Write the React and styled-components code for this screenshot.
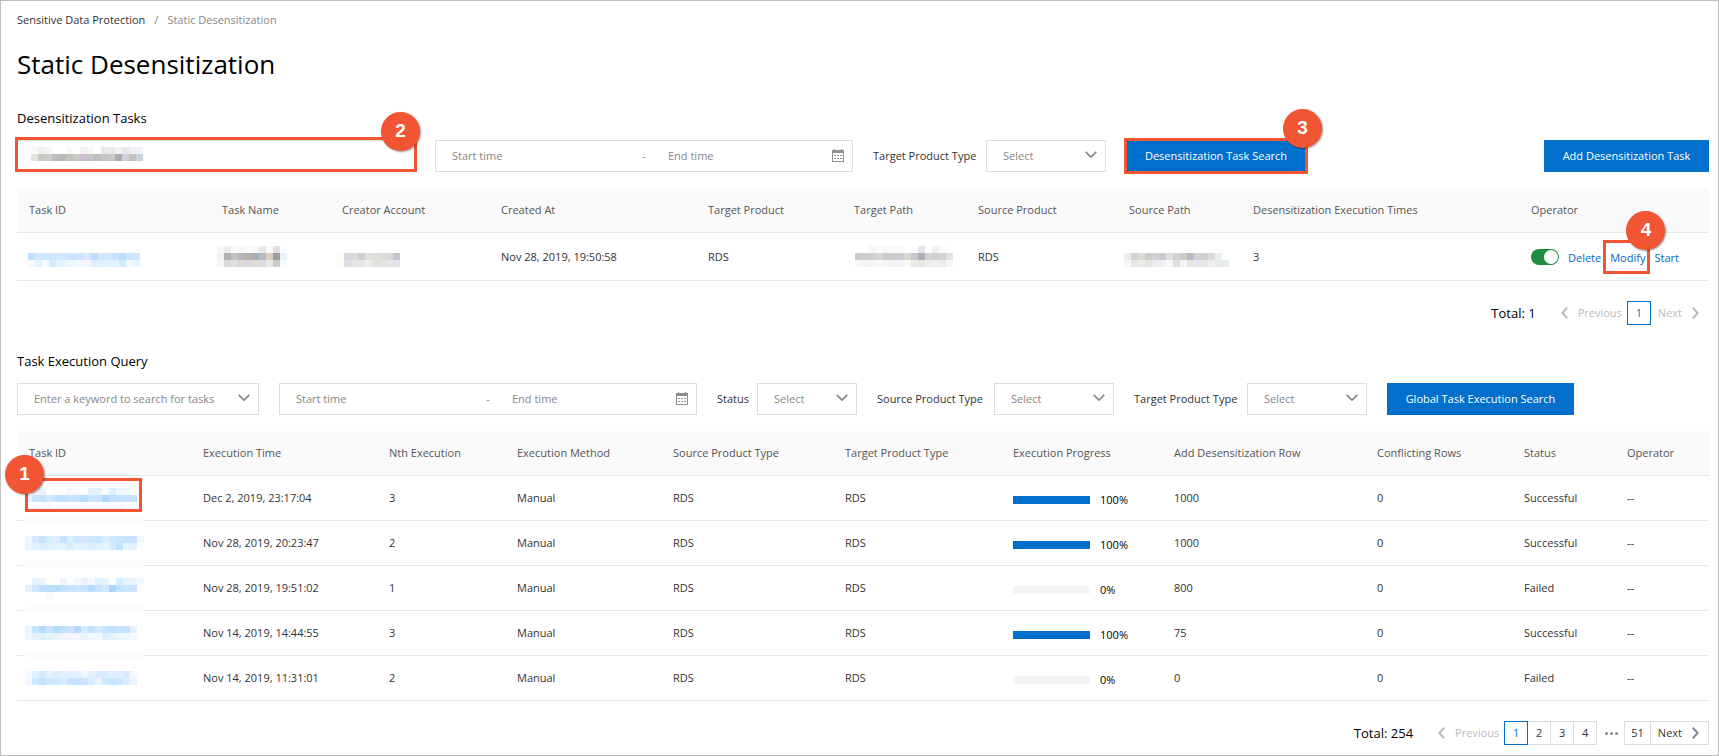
import React from "react";
import styled, { createGlobalStyle } from "styled-components";

const GlobalStyle = createGlobalStyle`
  * {
    box-sizing: border-box;
  }

  body {
    margin: 0;
    background: #fff;
    color: #333;
    font-family: "Open Sans", "Noto Sans", sans-serif;
    font-size: 11px;
    line-height: 16px;
  }

  button,
  input,
  select {
    font: inherit;
    color: inherit;
    margin: 0;
  }
`;

// 7px blocks, "-" leaves a block empty
const MASKS = {
  search: [
    "f9f9f6 f0f0f0 f4f4f4 - - f8f8f8 - f2f2f2 f7f7f7 - e9e9e9 e8e8ea f2f2f2 e6e6ec f0f0f0 f0f4fa",
    "e2e2de c9c9c5 cccccc c2bcbe b8b8b8 c2c6be cac8c6 c9bfd0 c4c4cc c0bcbc c8c4c6 c8c8c8 a9acb2 d0d0da c4c2b8 ccd2da",
  ],
  taskId: [
    "- - - - - - - - - - - - - - - -",
    "bfe0ff d4e9ff cfe8ff d0e6ff c9eaff cfe6ff cce2ff d0e4ff dbe9ff bde0ff d0e9ff cfe6ff cce4ff b9deff cce4ff cfe6ff",
    "f5faff e3f3ff f9fcff d4eeff e3f3ff eaf4ff eef6ff f2f8ff f5f5ff dfefff ddf2ff e2f3ff e3f2ff cfecff f2f8ff e6f5ff",
  ],
  taskName: [
    "f9f9f9 eaeeec fafafa f6f6f6 fbfbfa f8f8f6 e6e6ec fafafa e0e0e0 fafcff",
    "f9f0ea b4b2ae bcc6c4 b8b4b8 bab0a8 a4b0b8 b9b9c6 d4d0c6 9e9e9e e8f0f8",
    "f7f7f7 d8d8d8 e0e0e0 dcd8d8 dad8dc e0dcd6 dcdce0 e8e6e6 cccccc f6fafa",
  ],
  creator: [
    "- - - - - - - - -",
    "fcfaf6 d2dae0 dadada ccd0cc e0e0dc e0e0da dcdcd8 d8d8d8 c4c2ce",
    "fbfbf8 dfdfdf e4e4e4 e6e6e4 ececea e0e0e0 e2e2e2 e2e4e6 e2e2e6",
  ],
  targetPath: [
    "- - f7f7fa fcfcfc f4f6f8 fafafa fafafa - - e6e6e8 - f2f0f0 fafafa -",
    "ccc8ce d0ccd4 d0d0d0 d6d8d4 cccccc cacacc d0ccd0 d6d8d0 c8c8cc aeaeb4 d2d0d4 d0d0d0 d0d0da e2e2e2",
    "f7f7f7 f4f4f4 f4f4fa f6f8fa f4f4f4 f0f2f4 f4f4f6 fafafa eaeaea e6e6e4 ececea f0f0f0 ececf0 f4f6f6",
  ],
  sourcePath: [
    "- - - - - - - - - - - - - - -",
    "f0eaea d6d0d0 dadcd6 ccccc8 d2d0d8 cacacc e0e0e0 d2d2d4 d0ccc2 bab8c8 d2d0d8 d0d2d2 dedada eaeef2 -",
    "f7f7f4 e4e8e6 eaeeea e4e4e2 ececec ecf2f0 f6f8fa e2deda f6f6fa e6e6e8 e6e6ea e6e8ea eeeef0 eaece6 e6ecf0",
  ],
  exec1: [
    "- f6fbff e6f4ff - fbfdff - f5f9ff f7f9ff - e2f2ff e2f2ff f8fcff dceeff f0f6ff f0f8ff -",
    "e3f2ff cbe5ff c4e2ff d2e8ff c2e2ff bfe0ff c9e5ff c2e4ff b8dfff cbe6ff cce2ff b0d8ff bfe0ff c2e2ff c9e0ff c6e0ff",
    "- - fafcff f4faff - - - - - - - fcfdff fbfcff f8fcff - -",
  ],
  exec2: [
    "f2f8ff dbe8ff c6e4ff d6edff dceeff c6e4ff d8f0ff cfe8ff dee4ff c9e9ff c6e6ff d8eeff cce8ff c4e4ff c4e3ff cce0ff f0f8ff",
    "eaf4ff e4f2ff dceeff e0f0ff e2f2ff e2f2ff d6ecff e2f2ff e2f0ff dceeff e0f2ff e3f4ff d4ecff c2e4ff e4f4ff e0f2ff -",
  ],
  exec3: [
    "- e3f3ff e8f6ff - - eef6ff - f4f8ff eaf2ff f6faff e0f2ff e3f4ff - d6eeff e6f4ff eaf4ff f4f8ff",
    "e4f0ff d0e8ff bfe0ff bfdfff bbdeff c0e2ff c6e2ff cce6ff c6e2ff b4e0ff c8e4ff d2eaff acd6ff c2e2ff c8e6ff cce0ff fafcff",
    "- - - f6faff - - - - - - - - - - - - -",
  ],
  exec4: [
    "eaf6ff c9e6ff b0dcff cce4ff b4deff c0e2ff d0e4ff b8d8ff d6ecff c6e4ff d4eaff c4e4ff c0e2ff c4e4ff c6e0ff e4f4ff -",
    "f0f8ff e8f2ff e0f0ff e4f4ff eaf4ff f4f4ff f4f4ff f4f6ff e2f2ff f2f6ff f4f6ff dceeff e4f4ff eaf6ff eef6ff f6faff -",
  ],
  exec5: [
    "f4faff e0f2ff d4ecff eaf2ff dceeff e0f0ff e4f0ff e4f0ff f0f8ff e2f0ff dceaff dceaff e0eeff e0eeff dae8ff f6faff -",
    "f2f8ff d0eaff c0e4ff cce8ff d0eaff dcecff c6e2ff c6e4ff cce4ff d8eeff ecf0ff cce8ff c4e4ff cce8ff dceeff e8f4ff -",
  ],
};

const TASK_COLUMNS = [
  ["Task ID", 193],
  ["Task Name", 120],
  ["Creator Account", 159],
  ["Created At", 207],
  ["Target Product", 146],
  ["Target Path", 124],
  ["Source Product", 151],
  ["Source Path", 124],
  ["Desensitization Execution Times", 278],
  ["Operator", 190],
];

const EXECUTION_COLUMNS = [
  ["Task ID", 174],
  ["Execution Time", 186],
  ["Nth Execution", 128],
  ["Execution Method", 156],
  ["Source Product Type", 172],
  ["Target Product Type", 168],
  ["Execution Progress", 161],
  ["Add Desensitization Row", 203],
  ["Conflicting Rows", 147],
  ["Status", 103],
  ["Operator", 94],
];

const EXECUTIONS = [
  { mask: "exec1", time: "Dec 2, 2019, 23:17:04", nth: 3, progress: 100, rows: 1000, status: "Successful" },
  { mask: "exec2", time: "Nov 28, 2019, 20:23:47", nth: 2, progress: 100, rows: 1000, status: "Successful" },
  { mask: "exec3", time: "Nov 28, 2019, 19:51:02", nth: 1, progress: 0, rows: 800, status: "Failed" },
  { mask: "exec4", time: "Nov 14, 2019, 14:44:55", nth: 3, progress: 100, rows: 75, status: "Successful" },
  { mask: "exec5", time: "Nov 14, 2019, 11:31:01", nth: 2, progress: 0, rows: 0, status: "Failed" },
];

function Mask({ name }) {
  const rows = MASKS[name].map((row) => row.split(" "));
  const width = rows[0].length * 7;
  const height = rows.length * 7;
  return (
    <svg width={width} height={height} shapeRendering="crispEdges" aria-hidden="true">
      {rows.map((row, y) =>
        row.map((color, x) =>
          color === "-" ? null : <rect key={x + "-" + y} x={x * 7} y={y * 7} width="7" height="7" fill={"#" + color} />
        )
      )}
    </svg>
  );
}

function ChevronDown() {
  return (
    <svg width="12" height="8" viewBox="0 0 12 8" fill="none" stroke="#888" strokeWidth="1.7" aria-hidden="true">
      <path d="M0.7 0.8 L6 6 L11.3 0.8" />
    </svg>
  );
}

function Arrow({ left, muted }) {
  return (
    <svg width="7" height="12" viewBox="0 0 7 12" fill="none" stroke={muted ? "#bbb" : "#888"} strokeWidth="2" aria-hidden="true">
      <path d={left ? "M6.2 0.7 L1.4 6 L6.2 11.3" : "M0.8 0.7 L5.6 6 L0.8 11.3"} />
    </svg>
  );
}

function CalendarIcon() {
  return (
    <svg width="12" height="14" viewBox="0 0 12 14" fill="#8f8f8f" shapeRendering="crispEdges" aria-hidden="true">
      <path d="M2 0h1v1h6V0h1v1h2v12H0V1h2zM1 4v8h10V4z" fillRule="evenodd" />
      <path d="M2 6h2v1H2zM5 6h2v1H5zM8 6h2v1H8zM2 9h2v1H2zM5 9h2v1H5zM8 9h2v1H8z" />
    </svg>
  );
}

function SelectField({ id, label, labelWidth, width, placeholder = "Select" }) {
  return (
    <F.Field>
      {label && (
        <F.Label htmlFor={id} $width={labelWidth}>
          {label}
        </F.Label>
      )}
      <F.SelectBox $width={width}>
        <F.Select id={id} aria-label={label ? undefined : placeholder}>
          <option>{placeholder}</option>
        </F.Select>
        <F.SelectIcon>
          <ChevronDown />
        </F.SelectIcon>
      </F.SelectBox>
    </F.Field>
  );
}

function DateRange({ name }) {
  return (
    <F.Range>
      <F.RangeHalf>
        <F.RangeInput aria-label={name + " start time"} placeholder="Start time" />
      </F.RangeHalf>
      <F.RangeDash>-</F.RangeDash>
      <F.RangeHalf>
        <F.RangeInput aria-label={name + " end time"} placeholder="End time" />
        <CalendarIcon />
      </F.RangeHalf>
    </F.Range>
  );
}

function DataTable({ columns, children }) {
  return (
    <T.Table>
      <colgroup>
        {columns.map(([title, width]) => (
          <T.Col key={title} $width={width} />
        ))}
      </colgroup>
      <thead>
        <tr>
          {columns.map(([title]) => (
            <T.Head key={title}>{title}</T.Head>
          ))}
        </tr>
      </thead>
      <tbody>{children}</tbody>
    </T.Table>
  );
}

function App() {
  return (
    <>
      <GlobalStyle />
      <P.Page>
        <P.Breadcrumb aria-label="Breadcrumb">
          <a href="#home">Sensitive Data Protection</a>
          <span>/</span>
          <span>Static Desensitization</span>
        </P.Breadcrumb>
        <P.Title>Static Desensitization</P.Title>

        <P.SectionTitle>Desensitization Tasks</P.SectionTitle>
        <F.Toolbar>
          <F.SearchBox>
            <F.TextInput aria-label="Search tasks" />
            <F.SearchMask>
              <Mask name="search" />
            </F.SearchMask>
            <C.Frame $inset="-3px -2px 0 -2px" />
            <C.Badge $top="-28px" $right="-5px">2</C.Badge>
          </F.SearchBox>
          <DateRange name="Task" />
          <SelectField id="task-target" label="Target Product Type" labelWidth="105px" width="120px" />
          <C.Anchor>
            <F.Button $width="180px">Desensitization Task Search</F.Button>
            <C.Frame $inset="-2px" />
            <C.Badge $top="-31px" $right="-16px">3</C.Badge>
          </C.Anchor>
          <F.Spacer />
          <F.Button $width="165px">Add Desensitization Task</F.Button>
        </F.Toolbar>

        <DataTable columns={TASK_COLUMNS}>
          <T.Row $height="48px">
            <T.MaskCell $shift="-1px">
              <Mask name="taskId" />
            </T.MaskCell>
            <T.MaskCell $shift="-5px">
              <Mask name="taskName" />
            </T.MaskCell>
            <T.MaskCell $shift="-5px">
              <Mask name="creator" />
            </T.MaskCell>
            <T.Cell>Nov 28, 2019, 19:50:58</T.Cell>
            <T.Cell>RDS</T.Cell>
            <T.MaskCell $shift="1px">
              <Mask name="targetPath" />
            </T.MaskCell>
            <T.Cell>RDS</T.Cell>
            <T.MaskCell $shift="-5px">
              <Mask name="sourcePath" />
            </T.MaskCell>
            <T.Cell>3</T.Cell>
            <T.Cell>
              <T.Actions>
                <T.Switch type="checkbox" role="switch" aria-label="Task enabled" defaultChecked />
                <a href="#delete">Delete</a>
                <C.Anchor>
                  <a href="#modify">Modify</a>
                  <C.Frame $inset="-7px -5px -8px -7px" />
                  <C.Badge $top="-36px" $right="-20px">4</C.Badge>
                </C.Anchor>
                <a href="#start">Start</a>
              </T.Actions>
            </T.Cell>
          </T.Row>
        </DataTable>
        <G.Pagination aria-label="Task pages">
          <G.Total>Total: 1</G.Total>
          <G.Step disabled $plain>
            <Arrow left muted />
            Previous
          </G.Step>
          <G.Number aria-current="page">1</G.Number>
          <G.Step disabled $plain>
            Next
            <Arrow muted />
          </G.Step>
        </G.Pagination>

        <P.SectionTitle>Task Execution Query</P.SectionTitle>
        <F.Toolbar>
          <SelectField id="keyword" width="242px" placeholder="Enter a keyword to search for tasks" />
          <DateRange name="Execution" />
          <SelectField id="status" label="Status" labelWidth="32px" width="100px" />
          <SelectField id="execution-source" label="Source Product Type" labelWidth="109px" width="120px" />
          <SelectField id="execution-target" label="Target Product Type" labelWidth="105px" width="120px" />
          <F.Button $width="187px">Global Task Execution Search</F.Button>
        </F.Toolbar>

        <DataTable columns={EXECUTION_COLUMNS}>
          {EXECUTIONS.map((item, index) => (
            <T.Row key={item.time} $height="45px">
              <T.MaskCell $shift="-4px">
                <Mask name={item.mask} />
                {index < EXECUTIONS.length - 1 && <T.Smudge />}
                {index === 0 && (
                  <>
                    <C.Frame $inset="2px 49px 8px 8px" />
                    <C.Badge $top="-21px" $left="-12px">1</C.Badge>
                  </>
                )}
              </T.MaskCell>
              <T.Cell>{item.time}</T.Cell>
              <T.Cell>{item.nth}</T.Cell>
              <T.Cell>Manual</T.Cell>
              <T.Cell>RDS</T.Cell>
              <T.Cell>RDS</T.Cell>
              <T.Cell>
                <T.Progress>
                  <T.Track>
                    <T.Fill style={{ width: item.progress + "%" }} />
                  </T.Track>
                  {item.progress}%
                </T.Progress>
              </T.Cell>
              <T.Cell>{item.rows}</T.Cell>
              <T.Cell>0</T.Cell>
              <T.Cell>{item.status}</T.Cell>
              <T.Cell>--</T.Cell>
            </T.Row>
          ))}
        </DataTable>
        <G.Pagination aria-label="Execution pages">
          <G.Total>Total: 254</G.Total>
          <G.Step disabled $plain>
            <Arrow left muted />
            Previous
          </G.Step>
          <G.Number aria-current="page">1</G.Number>
          <G.Number>2</G.Number>
          <G.Number>3</G.Number>
          <G.Number>4</G.Number>
          <G.Dots>
            <i />
            <i />
            <i />
          </G.Dots>
          <G.Number>51</G.Number>
          <G.Step>
            Next
            <Arrow />
          </G.Step>
        </G.Pagination>
      </P.Page>
    </>
  );
}

export default App;

const P = {
  Page: styled.main`
    border: 1px solid #bfbfbf;
    padding: 11px 9px 10px 16px;
  `,
  Breadcrumb: styled.nav`
    display: flex;
    gap: 9px;
    color: #888;

    a {
      color: #333;
      text-decoration: none;
    }
  `,
  Title: styled.h1`
    margin: 20px 0 2px;
    color: #000;
    font-size: 26px;
    font-weight: 400;
    line-height: 32px;
  `,
  SectionTitle: styled.h2`
    margin: 0;
    padding: 27px 0 13px;
    color: #000;
    font-size: 13px;
    font-weight: 400;
    line-height: 18px;
  `,
};

const F = {
  Toolbar: styled.div`
    display: flex;
    align-items: center;
    gap: 20px;
    margin-bottom: 16px;
  `,
  Spacer: styled.div`
    flex: 1;
  `,
  Field: styled.div`
    display: flex;
    align-items: center;
    gap: 8px;
  `,
  Label: styled.label`
    min-width: ${(props) => props.$width};
    white-space: nowrap;
  `,
  SearchBox: styled.div`
    position: relative;
    width: 398px;
  `,
  SearchMask: styled.div`
    position: absolute;
    top: 7px;
    left: 14px;
    line-height: 0;
    pointer-events: none;
  `,
  TextInput: styled.input`
    display: block;
    width: 100%;
    height: 32px;
    padding: 0 16px;
    border: 1px solid #ddd;
    outline: none;
  `,
  SelectBox: styled.div`
    position: relative;
    width: ${(props) => props.$width};
  `,
  Select: styled.select`
    appearance: none;
    display: block;
    width: 100%;
    height: 32px;
    padding: 0 32px 0 16px;
    border: 1px solid #ddd;
    border-radius: 0;
    background: #fff;
    color: #888;
  `,
  SelectIcon: styled.span`
    position: absolute;
    top: 0;
    right: 9px;
    height: 30px;
    display: flex;
    align-items: center;
    pointer-events: none;
  `,
  Range: styled.div`
    display: flex;
    align-items: center;
    width: 418px;
    height: 32px;
    border: 1px solid #ddd;
    color: #888;
  `,
  RangeHalf: styled.div`
    flex: 1;
    display: flex;
    align-items: center;
    min-width: 0;
    padding-right: 8px;
  `,
  RangeInput: styled.input`
    flex: 1;
    min-width: 0;
    padding: 0 16px;
    border: 0;
    outline: none;
    background: none;

    &::placeholder {
      color: #888;
    }
  `,
  RangeDash: styled.span`
    width: 16px;
    text-align: center;
  `,
  Button: styled.button`
    display: block;
    min-width: ${(props) => props.$width};
    height: 32px;
    padding: 0 16px;
    border: 0;
    background: #0070cc;
    color: #fff;
    white-space: nowrap;
  `,
};

const T = {
  Table: styled.table`
    width: 100%;
    table-layout: fixed;
    border-collapse: separate;
    border-spacing: 0;
  `,
  Col: styled.col`
    width: ${(props) => props.$width}px;
  `,
  Head: styled.th`
    height: 45px;
    padding: 0 12px;
    border-bottom: 1px solid #e8e8e8;
    background: #fafafa;
    color: #555;
    font-weight: 400;
    text-align: left;
    white-space: nowrap;
  `,
  Row: styled.tr`
    height: ${(props) => props.$height};
  `,
  Cell: styled.td`
    padding: 0 0 0 12px;
    border-bottom: 1px solid #e8e8e8;
    white-space: nowrap;
  `,
  MaskCell: styled.td`
    position: relative;
    padding: 0 0 0 12px;
    border-bottom: 1px solid #e8e8e8;

    > svg {
      display: block;
      margin-left: ${(props) => props.$shift};
    }
  `,
  Smudge: styled.div`
    position: absolute;
    bottom: -3px;
    left: 8px;
    width: 119px;
    height: 7px;
    background: #fcfcfc;
  `,
  Actions: styled.div`
    display: flex;
    align-items: center;
    gap: 9px;

    a {
      display: block;
      padding-top: 3px;
      color: #0064c8;
      text-decoration: none;
    }
  `,
  Switch: styled.input`
    appearance: none;
    display: flex;
    justify-content: flex-end;
    width: 28px;
    height: 16px;
    padding: 1px;
    border-radius: 8px;
    background: #1e8e3e;

    &::after {
      content: "";
      width: 14px;
      height: 14px;
      border-radius: 50%;
      background: #fff;
    }
  `,
  Progress: styled.div`
    display: flex;
    align-items: center;
    gap: 10px;
    padding-top: 4px;
    color: #000;
  `,
  Track: styled.div`
    width: 77px;
    height: 8px;
    background: #f5f5f5;
  `,
  Fill: styled.div`
    height: 100%;
    background: #0070cc;
  `,
};

const G = {
  Pagination: styled.nav`
    display: flex;
    justify-content: flex-end;
    align-items: center;
    margin-top: 20px;
  `,
  Total: styled.span`
    margin-right: 18px;
    color: #000;
    font-size: 13px;
  `,
  Step: styled.button`
    display: flex;
    align-items: center;
    gap: 10px;
    height: 24px;
    padding: 0 9px 0 7px;
    border: 1px solid ${(props) => (props.$plain ? "transparent" : "#ddd")};
    margin-left: -1px;
    background: none;

    &:disabled {
      color: #bbb;
    }

    &:first-of-type {
      padding-right: 4px;
    }
  `,
  Number: styled.button`
    min-width: 24px;
    height: 24px;
    padding: 0 6px;
    border: 1px solid #ddd;
    margin-left: -1px;
    background: #fff;

    &[aria-current] {
      position: relative;
      margin-left: 0;
      border-color: #0070cc;
      color: #0070cc;
    }
  `,
  Dots: styled.span`
    display: flex;
    justify-content: center;
    gap: 2px;
    width: 28px;

    i {
      width: 3px;
      height: 3px;
      border-radius: 50%;
      background: #888;
    }
  `,
};

// numbered red markers that lie over the controls
const C = {
  Anchor: styled.div`
    position: relative;
  `,
  Frame: styled.div`
    position: absolute;
    inset: ${(props) => props.$inset};
    border: 3px solid #f25533;
    pointer-events: none;
  `,
  Badge: styled.span`
    position: absolute;
    z-index: 1;
    top: ${(props) => props.$top};
    left: ${(props) => props.$left};
    right: ${(props) => props.$right};
    width: 39px;
    height: 39px;
    border-radius: 50%;
    background: #f25533;
    box-shadow: 1px 1px 2px rgba(0, 0, 0, 0.4);
    color: #fff;
    font-family: "Liberation Sans", Arial, sans-serif;
    font-size: 19px;
    font-weight: 700;
    line-height: 38px;
    text-align: center;
  `,
};
